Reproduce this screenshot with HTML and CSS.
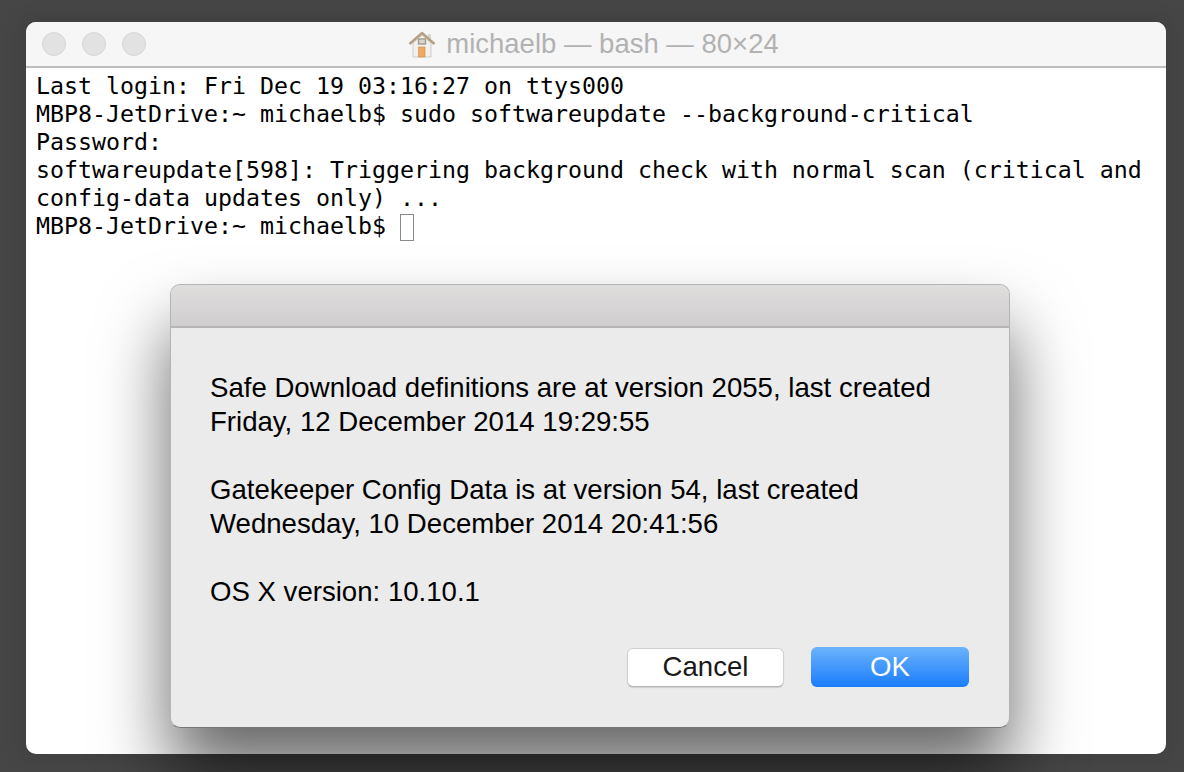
FILE: index.html
```
<!DOCTYPE html>
<html lang="en">
<head>
<meta charset="utf-8">
<title>michaelb — bash — 80×24</title>
<link rel="stylesheet" href="styles.css">
</head>
<body>
<div class="window">
  <header class="titlebar">
    <div class="lights"><span class="light"></span><span class="light"></span><span class="light"></span></div>
    <div class="title">
      <svg class="home" width="28" height="28" viewBox="0 0 28 28" aria-hidden="true">
        <rect x="20" y="4" width="3" height="7" fill="#d9d6d2"/>
        <path d="M5 13 14 5l9 8v14H5z" fill="#f1f0ee" stroke="#cfccc8" stroke-width="1"/>
        <path d="M1.5 14 14 3l12.500 11" fill="none" stroke="#b39f84" stroke-width="2.400" stroke-linejoin="round"/>
        <rect x="10.500" y="9" width="7" height="5" fill="#d8d4ce" stroke="#a59a8c" stroke-width="1.400"/>
        <rect x="10.500" y="17" width="6.500" height="10" fill="#f0a860" stroke="#c88c4c" stroke-width=".6"/>
      </svg>
      <span>michaelb — bash — 80×24</span>
    </div>
  </header>
  <pre class="terminal">Last login: Fri Dec 19 03:16:27 on ttys000
MBP8-JetDrive:~ michaelb$ sudo softwareupdate --background-critical
Password:
softwareupdate[598]: Triggering background check with normal scan (critical and
config-data updates only) ...
MBP8-JetDrive:~ michaelb$ <span class="cursor"></span></pre>
  <section class="dialog">
    <div class="dialog-head"></div>
    <div class="dialog-body">
      <p>Safe Download definitions are at version 2055, last created<br>Friday, 12 December 2014 19:29:55</p>
      <p>Gatekeeper Config Data is at version 54, last created<br>Wednesday, 10 December 2014 20:41:56</p>
      <p>OS X version: 10.10.1</p>
      <div class="actions">
        <button class="btn cancel">Cancel</button>
        <button class="btn ok">OK</button>
      </div>
    </div>
  </section>
</div>
</body>
</html>
```
FILE: styles.css
```
* { box-sizing: border-box; }
html, body { margin: 0; height: 772px; overflow: hidden; }
body {
  background: #464646;
  padding: 22px 18px 18px 26px;
  font-family: "Liberation Sans", Arial, sans-serif;
}
.window {
  position: relative;
  height: 732px;
  border-radius: 10px;
  background: #fff;
  box-shadow: 0 0 24px rgba(0, 0, 0, .14);
}
.titlebar {
  position: relative;
  height: 46px;
  display: flex;
  align-items: center;
  justify-content: center;
  background: #f6f6f6;
  border-bottom: 2px solid #bdbdbd;
  border-radius: 10px 10px 0 0;
}
.lights {
  position: absolute;
  left: 16px;
  top: 10px;
  display: flex;
  gap: 16px;
}
.light {
  width: 24px;
  height: 24px;
  border-radius: 50%;
  background: #e2e2e2;
  border: 1px solid #d6d6d6;
}
.title {
  display: flex;
  align-items: center;
  gap: 10px;
  color: #b2b2b2;
  font-size: 27.500px;
  margin: -1px 5px 0 0;
}
.home { display: block; }
.terminal {
  margin: 0;
  padding: 4px 10px;
  font-family: "DejaVu Sans Mono", monospace;
  font-size: 23.260px;
  line-height: 28px;
  color: #000;
}
.cursor {
  display: inline-block;
  width: 14px;
  height: 27px;
  border: 1px solid #8a8a8a;
  vertical-align: -7px;
}
.dialog {
  position: absolute;
  left: 144px;
  top: 262px;
  width: 840px;
  height: 444px;
  border-radius: 10px;
  overflow: hidden;
  background: #ebebeb;
  border: 1px solid #b4b4b4;
  border-bottom-color: #777;
  box-shadow: 0 44px 70px rgba(0, 0, 0, .6);
}
.dialog-head {
  height: 43px;
  background: linear-gradient(#e0dddd, #d0cecf);
  border-bottom: 2px solid #b5b5b5;
}
.dialog-body {
  padding: 43px 39px 0;
  font-size: 27.600px;
  line-height: 34px;
  color: #000;
}
.dialog-body p { margin: 0 0 34px; }
.actions {
  display: flex;
  justify-content: flex-end;
  align-items: center;
  gap: 27px;
  margin-top: 38px;
  padding-right: 1px;
}
.btn {
  font: inherit;
  padding: 0;
  border-radius: 6px;
}
.cancel {
  width: 157px;
  height: 39px;
  color: #1a1a1a;
  background: #fff;
  border: 1px solid #d0d0d0;
  border-bottom-color: #b4b4b4;
  box-shadow: 0 1px 1px rgba(0, 0, 0, .12);
}
.ok {
  width: 158px;
  height: 40px;
  color: #fff;
  background: linear-gradient(#6cb3fb, #1a7dfd);
  border: 0;
}
```
